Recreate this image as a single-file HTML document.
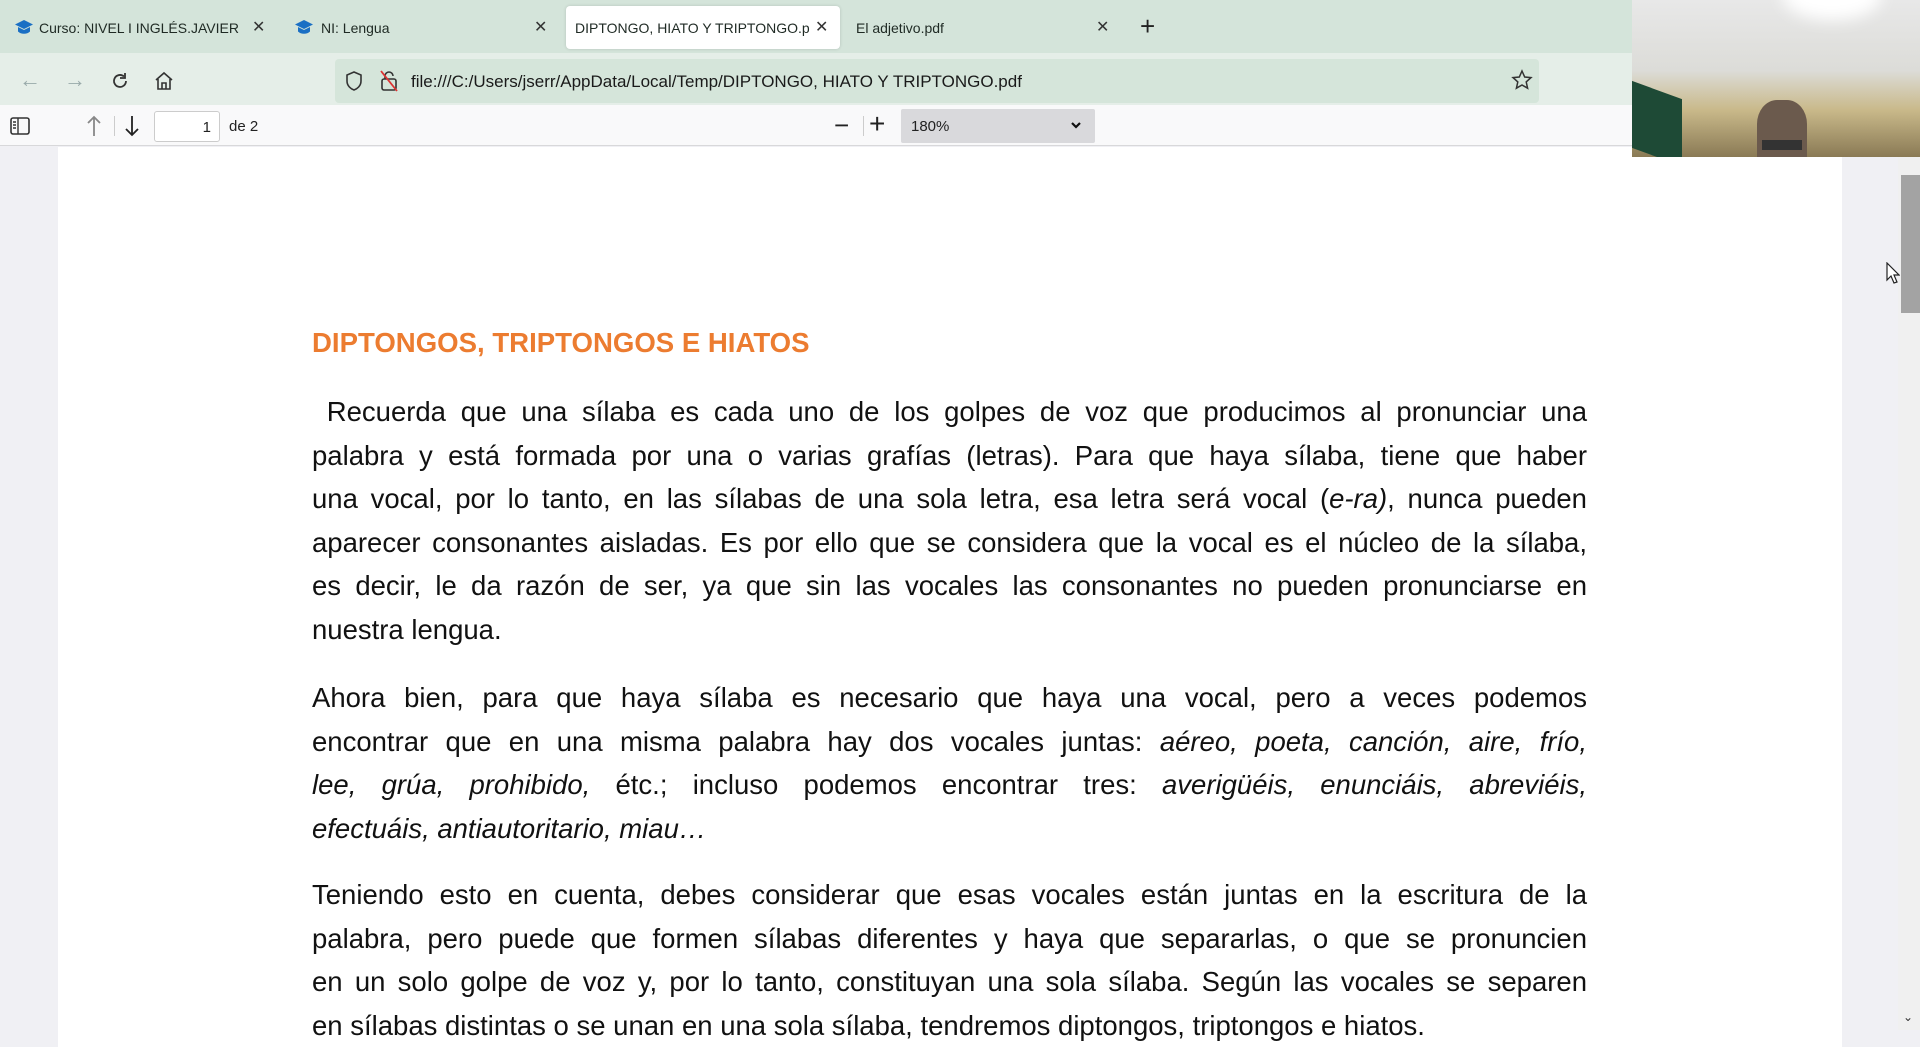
<!DOCTYPE html>
<html><head><meta charset="utf-8">
<style>
*{margin:0;padding:0;box-sizing:border-box}
body{width:1920px;height:1030px;overflow:hidden;position:relative;background:#f0f0f4;font-family:"Liberation Sans",sans-serif;}
.abs{position:absolute}
#tabbar{left:0;top:0;width:1920px;height:53px;background:#d4e4da}
#nav{left:0;top:53px;width:1920px;height:52px;background:#e5eee8}
#url{left:335px;top:59px;width:1204px;height:44px;background:#d5e5da;border-radius:4px}
#pdfbar{left:0;top:105px;width:1920px;height:41px;background:#f9f9fa;border-bottom:1px solid #d8d8da}
.tab{font-size:14px;color:#1f2a24;top:20px;white-space:nowrap}
.x{font-size:16px;color:#333;top:17px}
#active{left:566px;top:6px;width:274px;height:43px;background:#fff;border-radius:4px;box-shadow:0 0 3px rgba(0,0,0,.15)}
#page{left:58px;top:147px;width:1784px;height:900px;background:#fff}
#scroll{left:1898px;top:147px;width:22px;height:883px;background:#f0f0f0}
#thumb{left:1901px;top:175px;width:19px;height:138px;background:#a3a3a3}
#cam{left:1632px;top:0;width:288px;height:157px;background:linear-gradient(180deg,#e8e8e8 0%,#dcdcd8 45%,#c9b98a 70%,#8a7a55 100%);overflow:hidden}
.t{position:absolute;left:312px;width:1275px;font-size:27.5px;line-height:43.5px;color:#111;text-align:justify;text-align-last:justify;white-space:nowrap}
.t span.j{display:block}
i{font-style:italic}
h1{position:absolute;left:312px;top:327px;font-size:28px;font-weight:bold;color:#ec7c30;white-space:nowrap;transform:scaleX(.985);transform-origin:left}
</style></head><body>
<div id="tabbar" class="abs"></div>
<div id="active" class="abs"></div>
<svg class="abs" style="left:14px;top:19px" width="20" height="17" viewBox="0 0 20 17"><path d="M10 1 L19 5.5 L10 10 L1 5.5Z" fill="#1a6fc4"/><path d="M4 8 v4.5 c3 3 9 3 12 0 V8 L10 11Z" fill="#1a6fc4"/></svg>
<div class="abs tab" style="left:39px">Curso: NIVEL I INGLÉS.JAVIER</div>
<div class="abs x" style="left:252px">✕</div>
<svg class="abs" style="left:294px;top:19px" width="20" height="17" viewBox="0 0 20 17"><path d="M10 1 L19 5.5 L10 10 L1 5.5Z" fill="#1a6fc4"/><path d="M4 8 v4.5 c3 3 9 3 12 0 V8 L10 11Z" fill="#1a6fc4"/></svg>
<div class="abs tab" style="left:321px">NI: Lengua</div>
<div class="abs x" style="left:534px">✕</div>
<div class="abs tab" style="left:575px;width:235px;overflow:hidden">DIPTONGO, HIATO Y TRIPTONGO.pdf</div>
<div class="abs x" style="left:815px">✕</div>
<div class="abs tab" style="left:856px">El adjetivo.pdf</div>
<div class="abs x" style="left:1096px">✕</div>
<div class="abs" style="left:1140px;top:11px;font-size:26px;color:#222;font-weight:300">+</div>

<div id="nav" class="abs"></div>
<div class="abs" style="left:19px;top:67px;font-size:22px;color:#9aa">←</div>
<div class="abs" style="left:64px;top:67px;font-size:22px;color:#9aa">→</div>
<svg class="abs" style="left:110px;top:71px" width="20" height="20" viewBox="0 0 20 20"><path d="M16 10a6 6 0 1 1-2-4.5" fill="none" stroke="#333" stroke-width="1.8"/><path d="M15 2v5h-5" fill="none" stroke="#333" stroke-width="1.8"/></svg>
<svg class="abs" style="left:154px;top:71px" width="20" height="20" viewBox="0 0 20 20"><path d="M2 9L10 2l8 7M4 8v10h12V8M8 18v-6h4v6" fill="none" stroke="#333" stroke-width="1.6"/></svg>
<div id="url" class="abs"></div>
<svg class="abs" style="left:345px;top:71px" width="18" height="20" viewBox="0 0 18 20"><path d="M9 1l7 3v6c0 5-4 8-7 9-3-1-7-4-7-9V4z" fill="none" stroke="#333" stroke-width="1.6"/></svg>
<svg class="abs" style="left:380px;top:70px" width="18" height="22" viewBox="0 0 18 22"><rect x="2" y="9" width="14" height="11" rx="2" fill="none" stroke="#333" stroke-width="1.6"/><path d="M5 9V6a4 4 0 0 1 8 0" fill="none" stroke="#333" stroke-width="1.6"/><path d="M1 1l16 20" stroke="#d33" stroke-width="1.8"/></svg>
<div class="abs" style="left:411px;top:72px;font-size:17px;color:#1a1a1a;white-space:nowrap">file:///C:/Users/jserr/AppData/Local/Temp/DIPTONGO, HIATO Y TRIPTONGO.pdf</div>
<svg class="abs" style="left:1511px;top:69px" width="22" height="22" viewBox="0 0 22 22"><path d="M11 2l2.7 6 6.3.6-4.8 4.3 1.4 6.3L11 16l-5.6 3.2 1.4-6.3L2 8.6 8.3 8z" fill="none" stroke="#333" stroke-width="1.5"/></svg>

<div id="pdfbar" class="abs"></div>
<svg class="abs" style="left:10px;top:117px" width="20" height="18" viewBox="0 0 20 18"><rect x="1" y="1" width="18" height="16" rx="2" fill="none" stroke="#333" stroke-width="1.6"/><path d="M8 1v16M3 5h3M3 8h3M3 11h3" stroke="#333" stroke-width="1.4"/></svg>
<svg class="abs" style="left:86px;top:115px" width="16" height="22" viewBox="0 0 16 22"><path d="M8 21V2M2 8l6-6 6 6" fill="none" stroke="#888" stroke-width="1.8"/></svg>
<div class="abs" style="left:114px;top:116px;width:1px;height:20px;background:#ccc"></div>
<svg class="abs" style="left:124px;top:115px" width="16" height="22" viewBox="0 0 16 22"><path d="M8 1v19M2 14l6 6 6-6" fill="none" stroke="#222" stroke-width="1.8"/></svg>
<div class="abs" style="left:154px;top:111px;width:66px;height:31px;background:#fff;border:1px solid #ccc;border-radius:3px;font-size:15px;text-align:right;padding:7px 8px 0 0;color:#222">1</div>
<div class="abs" style="left:229px;top:118px;font-size:15px;color:#222">de 2</div>
<div class="abs" style="left:834px;top:110px;font-size:26px;color:#222">−</div>
<div class="abs" style="left:863px;top:116px;width:1px;height:20px;background:#ccc"></div>
<div class="abs" style="left:869px;top:108px;font-size:28px;color:#222">+</div>
<div class="abs" style="left:901px;top:109px;width:194px;height:34px;background:#d9d9dc;border-radius:2px"></div>
<div class="abs" style="left:911px;top:118px;font-size:15px;color:#222">180%</div>
<svg class="abs" style="left:1070px;top:121px" width="12" height="9" viewBox="0 0 12 9"><path d="M2 2l4 4 4-4" fill="none" stroke="#111" stroke-width="2.2"/></svg>

<div id="page" class="abs"></div>
<div id="scroll" class="abs"></div>
<div id="thumb" class="abs"></div>
<div class="abs" style="left:1903px;top:1010px;font-size:12px;color:#333">⌄</div>

<h1>DIPTONGOS, TRIPTONGOS E HIATOS</h1>
<div class="t" style="top:390px">
<span class="j">&nbsp;Recuerda que una sílaba es cada uno de los golpes de voz que producimos al pronunciar una</span>
<span class="j">palabra y está formada por una o varias grafías (letras). Para que haya sílaba, tiene que haber</span>
<span class="j">una vocal, por lo tanto, en las sílabas de una sola letra, esa letra será vocal (<i>e-ra)</i>, nunca pueden</span>
<span class="j">aparecer consonantes aisladas. Es por ello que se considera que la vocal es el núcleo de la sílaba,</span>
<span class="j">es decir, le da razón de ser, ya que sin las vocales las consonantes no pueden pronunciarse en</span>
<span style="display:block;text-align:left;text-align-last:left">nuestra lengua.</span>
</div>
<div class="t" style="top:676px">
<span class="j">Ahora bien, para que haya sílaba es necesario que haya una vocal, pero a veces podemos</span>
<span class="j">encontrar que en una misma palabra hay dos vocales juntas: <i>aéreo, poeta, canción, aire, frío,</i></span>
<span class="j"><i>lee, grúa, prohibido,</i> étc.; incluso podemos encontrar tres: <i>averigüéis, enunciáis, abreviéis,</i></span>
<span style="display:block;text-align:left;text-align-last:left"><i>efectuáis, antiautoritario, miau…</i></span>
</div>
<div class="t" style="top:873px">
<span class="j">Teniendo esto en cuenta, debes considerar que esas vocales están juntas en la escritura de la</span>
<span class="j">palabra, pero puede que formen sílabas diferentes y haya que separarlas, o que se pronuncien</span>
<span class="j">en un solo golpe de voz y, por lo tanto, constituyan una sola sílaba. Según las vocales se separen</span>
<span style="display:block;text-align:left;text-align-last:left">en sílabas distintas o se unan en una sola sílaba, tendremos diptongos, triptongos e hiatos.</span>
</div>

<div id="cam" class="abs">
<div class="abs" style="left:150px;top:-30px;width:100px;height:50px;border-radius:50%;background:#fff;filter:blur(8px)"></div>
<div class="abs" style="left:0;top:90px;width:50px;height:67px;background:#1e4a36;transform:skewY(20deg)"></div>
<div class="abs" style="left:125px;top:100px;width:50px;height:60px;border-radius:40% 40% 0 0;background:#6b5a4d"></div>
<div class="abs" style="left:130px;top:140px;width:40px;height:10px;background:#333"></div>
</div>
<svg class="abs" style="left:1886px;top:262px" width="14" height="22" viewBox="0 0 14 22"><path d="M1 1v17l4-4 3 7 3-1-3-7h5z" fill="#fff" stroke="#222" stroke-width="1.2"/></svg>
</body></html>
